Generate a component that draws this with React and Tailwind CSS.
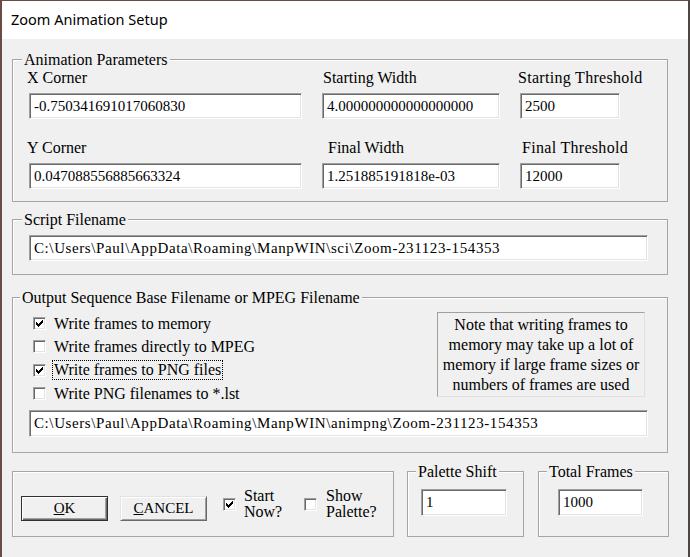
import React from 'react';

// Sunken Win32 edit field
const Field = ({ value, className = '' }) => (
  <input
    readOnly
    defaultValue={value}
    className={`bg-white pl-[4px] text-[15px] outline-none border border-t-[#a0a0a0] border-l-[#a0a0a0] border-r-white border-b-white shadow-[inset_1px_1px_0_#696969,inset_-1px_-1px_0_#e3e3e3] ${className}`}
  />
);

// Check glyph drawn pixel by pixel like the classic control
const Check = ({ checked }) => (
  <span className="w-[13px] h-[13px] shrink-0 bg-white flex items-center justify-center border border-t-[#a0a0a0] border-l-[#a0a0a0] border-r-white border-b-white shadow-[inset_1px_1px_0_#696969,inset_-1px_-1px_0_#e3e3e3]">
    {checked && (
      <svg width="7" height="7" viewBox="0 0 7 7" shapeRendering="crispEdges">
        <path d="M0 2h1v3h-1zM1 3h1v3h-1zM2 4h1v3h-1zM3 3h1v3h-1zM4 2h1v3h-1zM5 1h1v3h-1zM6 0h1v3h-1z" fill="#000" />
      </svg>
    )}
  </span>
);

const CheckRow = ({ checked, children, focus }) => (
  <div className="h-[23.3px] flex items-center">
    <Check checked={checked} />
    <span className={`ml-[7px] px-[1px] leading-[18px] ${focus ? 'outline outline-1 outline-dotted outline-black' : ''}`}>
      {children}
    </span>
  </div>
);

// Group box : fieldset sans padding, le contenu porte son propre padding
const Group = ({ title, legendClass = 'ml-[9px]', className = '', bodyClass = '', children }) => (
  <fieldset className={`border border-[#a5a5a5] shadow-[inset_1px_1px_0_#fff] ${className}`}>
    <legend className={`px-[2px] leading-[19px] bg-[#f0f0f0] ${legendClass}`}>{title}</legend>
    <div className={bodyClass}>{children}</div>
  </fieldset>
);

const App = () => {
  return (
    <div className="w-[690px] h-[557px] bg-[#f0f0f0] border-t border-l-2 border-r-2 border-t-[#6a4c47] border-l-[#6a4c47] border-r-[#4e4642] flex flex-col overflow-hidden">
      {/* Barre de titre */}
      <div className="h-[38px] shrink-0 bg-white flex items-center pl-[9px] [font-family:'Noto_Sans',sans-serif] text-[14.5px] text-black">
        Zoom Animation Setup
      </div>

      <div className="pl-[10px] [font-family:'Liberation_Serif',serif] text-[16px] text-black">
        {/* Animation Parameters */}
        <Group title="Animation Parameters" className="mt-[11px] w-[656px]" bodyClass="pl-[16px] pb-[12px]">
          <div className="flex">
            <div className="w-[273px] flex flex-col">
              <span className="-ml-[2px] leading-[18px]">X Corner</span>
              <Field value="-0.750341691017060830" className="mt-[6px] h-[26px] w-[273px]" />
            </div>
            <div className="ml-[20px] w-[178px] flex flex-col">
              <span className="ml-[1px] leading-[18px]">Starting Width</span>
              <Field value="4.000000000000000000" className="mt-[6px] h-[26px] w-[178px]" />
            </div>
            <div className="ml-[20px] w-[100px] flex flex-col">
              <span className="-ml-[2px] leading-[18px] whitespace-nowrap tracking-[0.3px]">Starting Threshold</span>
              <Field value="2500" className="mt-[6px] h-[26px] w-[100px]" />
            </div>
          </div>
          <div className="flex mt-[20px]">
            <div className="w-[273px] flex flex-col">
              <span className="-ml-[2px] leading-[18px]">Y Corner</span>
              <Field value="0.047088556885663324" className="mt-[6px] h-[26px] w-[273px]" />
            </div>
            <div className="ml-[20px] w-[178px] flex flex-col">
              <span className="ml-[6px] leading-[18px]">Final Width</span>
              <Field value="1.251885191818e-03" className="mt-[6px] h-[26px] w-[178px]" />
            </div>
            <div className="ml-[20px] w-[100px] flex flex-col">
              <span className="ml-[2px] leading-[18px] whitespace-nowrap tracking-[0.3px]">Final Threshold</span>
              <Field value="12000" className="mt-[6px] h-[26px] w-[100px]" />
            </div>
          </div>
        </Group>

        {/* Script Filename */}
        <Group title="Script Filename" className="mt-[8px] w-[656px]" bodyClass="pl-[16px] pt-[6px] pb-[13px]">
          <Field
            value="C:\Users\Paul\AppData\Roaming\ManpWIN\sci\Zoom-231123-154353"
            className="h-[26px] w-[619px] tracking-[0.6px]"
          />
        </Group>

        {/* Output Sequence */}
        <Group
          title="Output Sequence Base Filename or MPEG Filename"
          legendClass="ml-[7px]"
          className="mt-[13px] w-[656px]"
          bodyClass="pl-[16px] pt-[5px] pb-[15px]"
        >
          <div className="flex">
            <div className="flex-1 flex flex-col pl-[4px]">
              <CheckRow checked>Write frames to memory</CheckRow>
              <CheckRow>Write frames directly to MPEG</CheckRow>
              <CheckRow checked focus>Write frames to PNG files</CheckRow>
              <CheckRow>Write PNG filenames to *.lst</CheckRow>
            </div>
            <div className="w-[208px] h-[85px] mr-[22px] flex flex-col items-center justify-center leading-[20px] border border-t-[#a0a0a0] border-l-[#a0a0a0] border-r-[#e0e0e0] border-b-[#e0e0e0]">
              <span>Note that writing frames to</span>
              <span>memory may take up a lot of</span>
              <span>memory if large frame sizes or</span>
              <span>numbers of frames are used</span>
            </div>
          </div>
          <Field
            value="C:\Users\Paul\AppData\Roaming\ManpWIN\animpng\Zoom-231123-154353"
            className="mt-[5px] h-[27px] w-[619px] tracking-[0.6px]"
          />
        </Group>

        {/* Rangée du bas */}
        <div className="flex items-start mt-[9px]">
          <div className="mt-[9px] w-[382px] h-[66px] border border-[#a5a5a5] shadow-[inset_1px_1px_0_#fff] flex items-center pl-[8px]">
            <button className="w-[87px] h-[25px] mt-[9px] bg-[#f0f0f0] border border-[#303030] shadow-[inset_1px_1px_0_#fff,inset_-1px_-1px_0_#696969,inset_-2px_-2px_0_#a0a0a0] text-[15px] leading-none">
              <span className="underline">O</span>K
            </button>
            <button className="ml-[12px] w-[87px] h-[25px] mt-[9px] bg-[#f0f0f0] border border-t-[#e3e3e3] border-l-[#e3e3e3] border-r-[#696969] border-b-[#696969] shadow-[inset_1px_1px_0_#fff,inset_-1px_-1px_0_#a0a0a0] text-[15px] leading-none">
              <span className="underline">C</span>ANCEL
            </button>
            <div className="ml-[16px] w-[81px] flex items-center">
              <Check checked />
              <span className="ml-[8px] leading-[16px] flex flex-col">
                <span>Start</span>
                <span>Now?</span>
              </span>
            </div>
            <div className="flex items-center">
              <Check />
              <span className="ml-[9px] leading-[16px] flex flex-col">
                <span>Show</span>
                <span>Palette?</span>
              </span>
            </div>
          </div>

          <Group title="Palette Shift" legendClass="ml-[8px]" className="ml-[13px] w-[117px] h-[75px]" bodyClass="pl-[13px] pt-[8px]">
            <Field value="1" className="h-[27px] w-[86px]" />
          </Group>

          <Group title="Total Frames" legendClass="ml-[8px]" className="ml-[14px] w-[131px] h-[75px]" bodyClass="pl-[19px] pt-[8px]">
            <Field value="1000" className="h-[27px] w-[85px]" />
          </Group>
        </div>
      </div>
    </div>
  );
};

export default App;
